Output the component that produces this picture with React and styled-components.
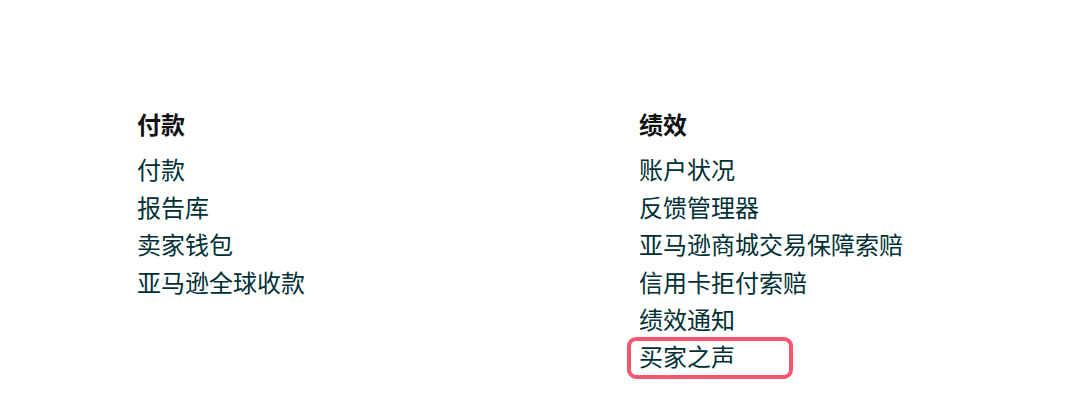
import React from 'react';
import styled, { createGlobalStyle } from 'styled-components';

const GlobalStyle = createGlobalStyle`
  html, body {
    margin: 0;
    padding: 0;
    background: #ffffff;
  }
  body {
    font-family: "Noto Sans CJK SC", "Noto Sans", sans-serif;
  }
`;

const Page = styled.div`
  width: 1080px;
  height: 408px;
  box-sizing: border-box;
  padding: 105px 0 0 137px;
  display: grid;
  grid-template-columns: 502px 1fr;
  align-items: start;
`;

const Section = styled.section`
  display: flex;
  flex-direction: column;
`;

const Title = styled.h3`
  margin: 0 0 8px;
  font-size: 24px;
  line-height: 37.4px;
  font-weight: 700;
  color: #0f1111;
`;

const LinkList = styled.ul`
  list-style: none;
  margin: 0;
  padding: 0;
`;

const Item = styled.li`
  font-size: 24px;
  line-height: 37.4px;
  color: #002f36;
`;

const Marked = styled.span`
  position: relative;
  display: inline-block;

  &::after {
    content: '';
    position: absolute;
    left: -12px;
    top: 0;
    width: 166px;
    height: 42px;
    box-sizing: border-box;
    border: 4px solid #f7566b;
    border-radius: 9px;
    pointer-events: none;
  }
`;

const sections = [
  {
    title: '付款',
    links: ['付款', '报告库', '卖家钱包', '亚马逊全球收款'],
  },
  {
    title: '绩效',
    links: ['账户状况', '反馈管理器', '亚马逊商城交易保障索赔', '信用卡拒付索赔', '绩效通知', '买家之声'],
    marked: '买家之声',
  },
];

export default function App() {
  return (
    <>
      <GlobalStyle />
      <Page>
        {sections.map((section) => (
          <Section key={section.title}>
            <Title>{section.title}</Title>
            <LinkList>
              {section.links.map((link) => (
                <Item key={link}>
                  {link === section.marked ? <Marked>{link}</Marked> : link}
                </Item>
              ))}
            </LinkList>
          </Section>
        ))}
      </Page>
    </>
  );
}
